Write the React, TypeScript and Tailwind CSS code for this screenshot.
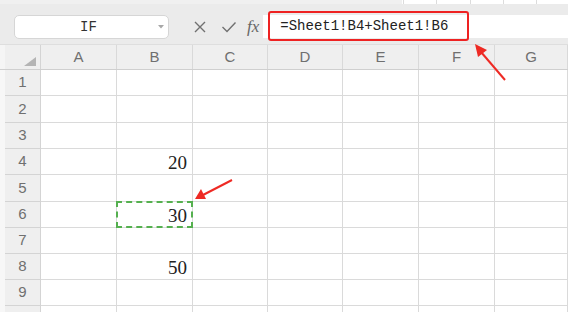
import React from 'react';

const cols = [
  { name: 'A', w: 'w-[76px]' },
  { name: 'B', w: 'w-[76px]' },
  { name: 'C', w: 'w-[75px]' },
  { name: 'D', w: 'w-[75px]' },
  { name: 'E', w: 'w-[76px]' },
  { name: 'F', w: 'w-[76px]' },
  { name: 'G', w: 'flex-1' },
];

// row 10 is only a sliver at the bottom edge, its label is not visible
const rows = [
  { n: '1', h: 'h-[26px]' },
  { n: '2', h: 'h-[27px]' },
  { n: '3', h: 'h-[26px]' },
  { n: '4', h: 'h-[26px]', b: '20' },
  { n: '5', h: 'h-[27px]' },
  { n: '6', h: 'h-[26px]', b: '30', sel: true },
  { n: '7', h: 'h-[26px]' },
  { n: '8', h: 'h-[26px]', b: '50' },
  { n: '9', h: 'h-[26px]' },
  { n: '', h: 'h-[26px]' },
];

const App = () => {
  return (
    <div className="relative w-[568px] h-[312px] overflow-hidden bg-white font-['Liberation_Sans',sans-serif]">
      {/* sliver of the sheet above */}
      <div className="flex h-[4px] bg-[#f0f0f0]">
        <div className="w-[402px]" />
        <div className="flex flex-1 bg-white">
          <div className="w-[2px] border-r border-[#dcdcdc]" />
          <div className="w-[33px] border-r border-[#dcdcdc]" />
          <div className="w-[34px] border-r border-[#dcdcdc]" />
          <div className="w-[33px] border-r border-[#dcdcdc]" />
          <div className="w-[33px] border-r border-[#dcdcdc]" />
        </div>
      </div>

      {/* formula toolbar */}
      <div className="flex items-start h-[41px] bg-[#ebebeb] pt-[11px] border-b border-[#dedede]">
        <div className="ml-[14px] flex items-center w-[155px] h-[24px] bg-white border border-[#d6d6d6] rounded-[5px]">
          <span className="flex-1 text-center pl-[4px] text-[14px] text-[#333] font-['Liberation_Mono',monospace]">IF</span>
          <svg width="6" height="4" viewBox="0 0 6 4" className="mr-[4px]">
            <path d="M0 0 L6 0 L3 3.5 Z" fill="#a8a8a8" />
          </svg>
        </div>
        <div className="flex items-center h-[24px] ml-[24px] text-[#666]">
          <svg width="14" height="14" viewBox="0 0 14 14">
            <path d="M2 2 L12 12 M12 2 L2 12" stroke="#707070" strokeWidth="1.4" fill="none" />
          </svg>
          <svg width="16" height="14" viewBox="0 0 16 14" className="ml-[14px]">
            <path d="M1.5 7 L6 11.5 L14.5 2.5" stroke="#707070" strokeWidth="1.4" fill="none" />
          </svg>
          <span className="ml-[10px] italic text-[17px] text-[#666] font-['Liberation_Serif',serif]">fx</span>
        </div>
        <div className="ml-[4px] flex-1 h-[23px] bg-white flex items-center pl-[17px] text-[14px] text-[#222] font-['Liberation_Mono',monospace]">
          =Sheet1!B4+Sheet1!B6
        </div>
      </div>

      {/* column headers */}
      <div className="flex h-[25px] bg-[#f5f5f5] border-b border-[#cfcfcf]">
        <div className="w-[5px]" />
        <div className="w-[36px] bg-[#efefef] border-r border-[#d4d4d4] flex items-end justify-end pr-[4px] pb-[3px]">
          <svg width="12" height="9" viewBox="0 0 12 9">
            <path d="M12 0 L12 9 L0 9 Z" fill="#b4b4b4" />
          </svg>
        </div>
        {cols.map((c) => (
          <div
            key={c.name}
            className={`${c.w} bg-[#efefef] border-r border-[#d9d9d9] flex items-center justify-center text-[15px] text-[#6f6f6f]`}
          >
            {c.name}
          </div>
        ))}
      </div>

      {/* grid */}
      {rows.map((r, i) => (
        <div key={i} className={`flex ${r.h} bg-[#f7f7f7]`}>
          <div className="w-[5px]" />
          <div className="w-[36px] bg-[#efefef] border-r border-b border-[#d4d4d4] flex items-center justify-center text-[15px] text-[#707070]">
            {r.n}
          </div>
          {cols.map((c) => (
            <div
              key={c.name}
              className={`${c.w} relative bg-white border-r border-b border-[#dadada] flex items-center justify-end pr-[5px] pt-[4px] text-[19px] text-[#222] font-['Liberation_Serif',serif]`}
            >
              {c.name === 'B' && r.b}
              {c.name === 'B' && r.sel && (
                <div className="absolute -left-px -top-px w-[77px] h-[27px] border-2 border-dashed border-[#55b04f]" />
              )}
            </div>
          ))}
        </div>
      ))}

      {/* red annotation box around formula */}
      <div className="absolute left-[268px] top-[11px] w-[201px] h-[30px] border-2 border-[#ee2222] rounded-[3px]" />

      {/* red arrows */}
      <svg className="absolute left-0 top-0" width="568" height="312" viewBox="0 0 568 312">
        <g stroke="#ee2a24" strokeWidth="2" fill="#ee2a24">
          <line x1="505" y1="80" x2="481" y2="52" />
          <path d="M475 44 L487 50 L478 57 Z" stroke="none" />
          <line x1="232" y1="180" x2="203" y2="195" />
          <path d="M195 199 L201 189 L206 199 Z" stroke="none" />
        </g>
      </svg>
    </div>
  );
};

export default App;
